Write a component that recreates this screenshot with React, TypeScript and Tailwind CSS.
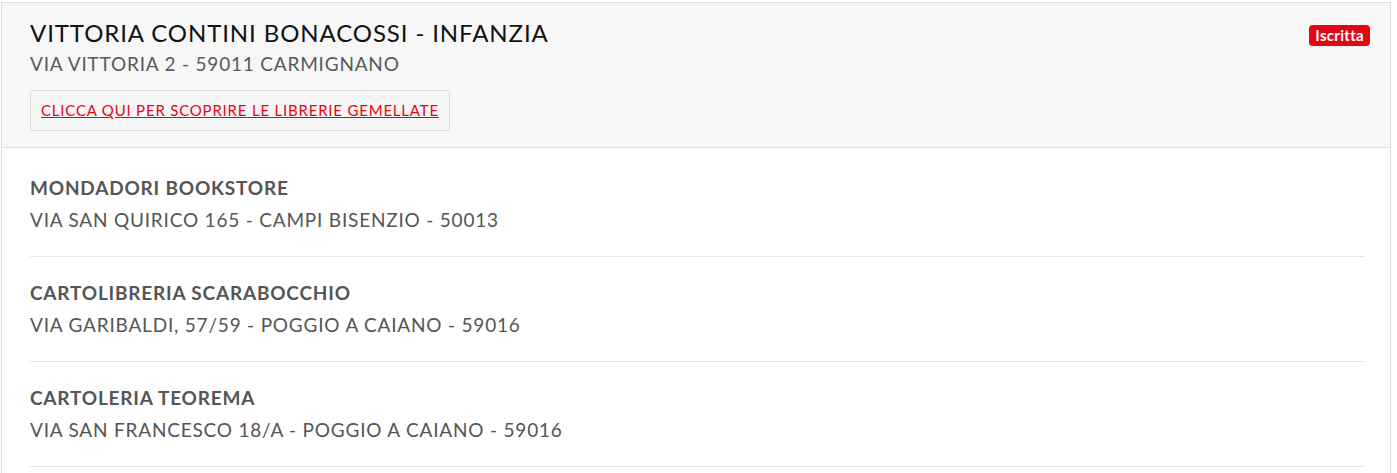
import React from "react";

const librerie = [
  { nome: "MONDADORI BOOKSTORE", indirizzo: "VIA SAN QUIRICO 165 - CAMPI BISENZIO - 50013" },
  { nome: "CARTOLIBRERIA SCARABOCCHIO", indirizzo: "VIA GARIBALDI, 57/59 - POGGIO A CAIANO - 59016" },
  { nome: "CARTOLERIA TEOREMA", indirizzo: "VIA SAN FRANCESCO 18/A - POGGIO A CAIANO - 59016" },
];

export default function App() {
  return (
    <div className="min-h-[473px] bg-white pt-[2px] pl-[1px] font-['Lato','Liberation_Sans',sans-serif]">
      {/* scheda scuola */}
      <div className="w-[1390px] border border-[#dedede] bg-white">
        {/* intestazione */}
        <div className="flex items-start justify-between bg-[#f7f7f7] border-b border-[#dedede] pl-[28px] pr-[20px] pt-[15px] pb-[16px]">
          <div>
            <div className="text-[24px] leading-[30px] tracking-[0.9px] text-[#111111]">VITTORIA CONTINI BONACOSSI - INFANZIA</div>
            <div className="mt-[4px] text-[19px] leading-[24px] tracking-[0.8px] text-[#5a5a5a]">VIA VITTORIA 2 - 59011 CARMIGNANO</div>
            <div className="mt-[14px] inline-block rounded-[3px] border border-[#dddddd] bg-[#f5f5f5] px-[10px] py-[9px] text-[15px] leading-[21px] tracking-[0.8px]">
              <a href="#" className="text-[#e30613] underline">
                CLICCA QUI PER SCOPRIRE LE LIBRERIE GEMELLATE
              </a>
            </div>
          </div>
          <span className="mt-[7px] rounded-[4px] bg-[#e30613] px-[6px] text-[15px] leading-[21px] tracking-[0.3px] font-bold text-white">
            Iscritta
          </span>
        </div>

        {/* elenco librerie */}
        <div className="pt-[4px] pb-[24px] pl-[28px] pr-[25px]">
          {librerie.map((l) => (
            <div key={l.nome} className="border-b border-[#e5e5e5] pt-[24px] pb-[24px]">
              <div className="text-[19px] leading-[24px] tracking-[0.8px] font-bold text-[#555555]">{l.nome}</div>
              <div className="mt-[8px] text-[19px] leading-[24px] tracking-[0.8px] text-[#555555]">{l.indirizzo}</div>
            </div>
          ))}
        </div>
      </div>
    </div>
  );
}
